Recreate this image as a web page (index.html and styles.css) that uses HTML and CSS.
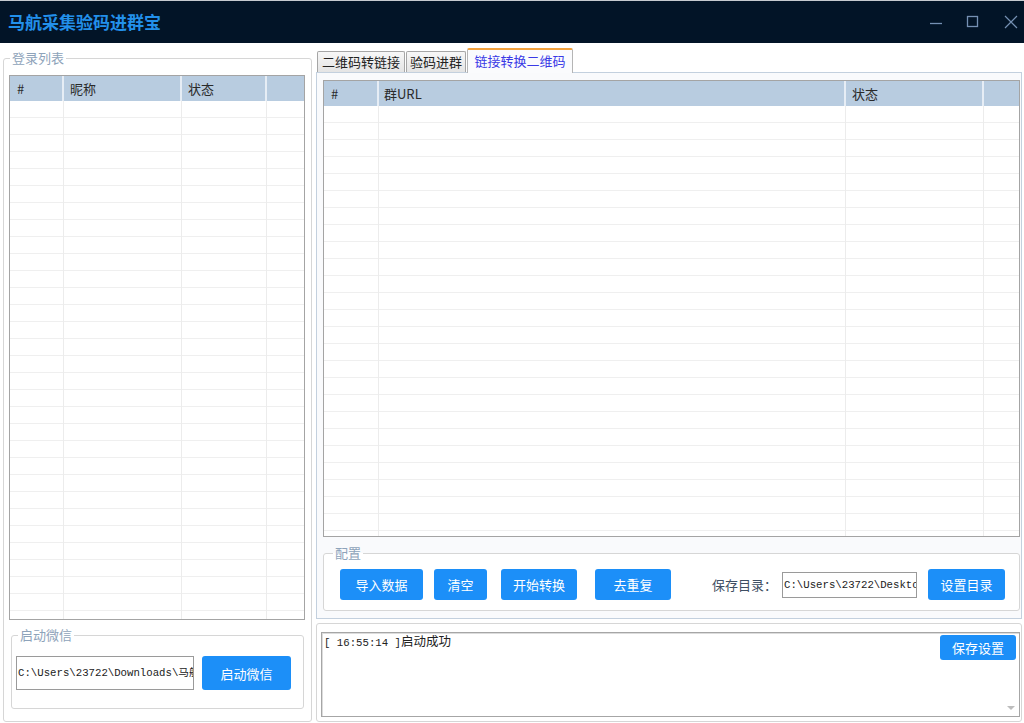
FILE: index.html
```html
<!DOCTYPE html>
<html lang="zh-CN">
<head>
<meta charset="utf-8">
<title>马航采集验码进群宝</title>
<link rel="stylesheet" href="styles.css">
</head>
<body>
<header class="titlebar">
  <h1 class="title">马航采集验码进群宝</h1>
  <div class="winctrls">
    <span class="wbtn"><svg width="14" height="14" viewBox="0 0 14 14"><path d="M1 8.5H13" stroke="#7590b3" stroke-width="1.3" fill="none"/></svg></span>
    <span class="wbtn"><svg width="14" height="14" viewBox="0 0 14 14"><rect x="1.5" y="1.5" width="10" height="10" stroke="#7590b3" stroke-width="1.3" fill="none"/></svg></span>
    <span class="wbtn close"><svg width="14" height="14" viewBox="0 0 14 14"><path d="M1 1L13 13M13 1L1 13" stroke="#7590b3" stroke-width="1.2" fill="none"/></svg></span>
  </div>
</header>
<main class="main">
  <fieldset class="group login">
    <legend>登录列表</legend>
    <div class="grid lgrid">
      <div class="ghead">
        <div class="c c1">#</div><div class="c c2">昵称</div><div class="c c3">状态</div><div class="c c4"></div>
      </div>
      <div class="gbody">
        <div class="col c1"></div><div class="col c2"></div><div class="col c3"></div><div class="col c4"></div>
      </div>
    </div>
    <fieldset class="group wx">
      <legend>启动微信</legend>
      <div class="wxrow">
        <div class="path wxpath">C:\Users\23722\Downloads\马航</div>
        <button class="btn wxbtn">启动微信</button>
      </div>
    </fieldset>
  </fieldset>

  <section class="right">
    <nav class="tabs">
      <span class="tab t1">二维码转链接</span>
      <span class="tab t2">验码进群</span>
      <span class="tab t3 active">链接转换二维码</span>
    </nav>
    <div class="panel">
      <div class="grid rgrid">
        <div class="ghead">
          <div class="c c1">#</div><div class="c c2">群URL</div><div class="c c3">状态</div><div class="c c4"></div>
        </div>
        <div class="gbody">
          <div class="col c1"></div><div class="col c2"></div><div class="col c3"></div><div class="col c4"></div>
        </div>
      </div>
      <fieldset class="group config">
        <legend>配置</legend>
        <div class="cfgrow">
          <button class="btn b-import">导入数据</button>
          <button class="btn b-clear">清空</button>
          <button class="btn b-start">开始转换</button>
          <button class="btn b-dedup">去重复</button>
          <span class="savelabel">保存目录：</span>
          <div class="path savepath">C:\Users\23722\Deskto</div>
          <button class="btn b-dir">设置目录</button>
        </div>
      </fieldset>
    </div>
    <div class="log">
      <div class="logbox">
        <p class="logline"><span class="mono">[ 16:55:14 ]</span>启动成功</p>
        <span class="arrow up"></span>
        <span class="arrow down"></span>
      </div>
      <button class="btn b-save">保存设置</button>
    </div>
  </section>
</main>
</body>
</html>
```
FILE: styles.css
```css
* { box-sizing: border-box; }
html, body { margin: 0; padding: 0; }
body {
  width: 1024px;
  height: 723px;
  overflow: hidden;
  background: #ffffff;
  font-family: "Noto Sans CJK SC", "Noto Sans", sans-serif;
  font-size: 13px;
  color: #222;
}

/* title bar */
.titlebar {
  height: 43px;
  background: #021427;
  border-top: 1px solid #c6cacf;
  display: flex;
  align-items: center;
  justify-content: space-between;
}
.title {
  margin: 0 0 0 8px;
  font-size: 17px;
  font-weight: bold;
  color: #2290ea;
  line-height: 20px;
}
.winctrls { display: flex; height: 100%; align-items: center; margin-right: -7px; }
.wbtn { width: 37px; height: 100%; display: flex; align-items: center; justify-content: center; }
.wbtn.close { width: 40px; }

/* main layout */
.main { display: flex; height: 680px; }

.group {
  margin: 0;
  border: 1px solid #d6d6d6;
  border-radius: 3px;
  min-width: 0;
}
.group > legend {
  padding: 0 2px;
  font-size: 13px;
  line-height: 16px;
  color: #8ea3ba;
}

.login {
  margin: 7px 0 0 3px;
  width: 309px;
  height: 672px;
  padding: 9px 6px 10px 5px;
  display: flex;
  flex-direction: column;
}
.login > legend { margin-left: 1px; }

/* grids */
.grid {
  border: 1px solid #a4a4a4;
  background: #fff;
  display: flex;
  flex-direction: column;
}
.ghead {
  display: flex;
  height: 25px;
  background: #b8cce0;
  flex: none;
}
.ghead .c {
  border-right: 2px solid #e6edf5;
  padding-left: 6px;
  line-height: 25px;
  font-size: 13px;
  color: #2a2a2a;
}
.ghead .c4 { border-right: 0; }
.gbody {
  flex: 1;
  display: flex;
  background: repeating-linear-gradient(to bottom, transparent 0, transparent 16px, #efefef 16px, #efefef 17px);
}
.gbody .col { border-right: 1px solid #ececec; }
.gbody .c4 { border-right: 0; }
.c4 { flex: 1; }

.lgrid { height: 545px; flex: none; }
.lgrid .c1 { width: 54px; }
.lgrid .c2 { width: 118px; }
.lgrid .c3 { width: 85px; }
.lgrid .ghead .c1 { padding-left: 7px; }

.rgrid { height: 457px; flex: none; }
.rgrid .c1 { width: 55px; }
.rgrid .c2 { width: 467px; }
.rgrid .c3 { width: 138px; }
.rgrid .ghead .c1 { padding-left: 7px; }
.rgrid .ghead .c2 { padding-left: 5px; }

/* wechat launch box */
.wx {
  margin: 7px 0 0 2px;
  width: 293px;
  padding: 13px 4px 18px 4px;
}
.wx > legend { margin-left: 2px; }
.wxrow { display: flex; align-items: center; }
.path {
  border: 1px solid #9a9a9a;
  background: #fff;
  font-family: "Liberation Mono", "Noto Sans CJK SC", monospace;
  font-size: 10.7px;
  color: #222;
  white-space: nowrap;
  overflow: hidden;
  padding-left: 1px;
}
.wxpath { width: 178px; height: 34px; line-height: 32px; }
.btn {
  border: 0;
  border-radius: 3px;
  background: #1c8ff8;
  color: #fff;
  font-family: "Noto Sans CJK SC", sans-serif;
  font-size: 13px;
  padding: 0;
  flex: none;
}
.wxbtn { margin-left: 8px; width: 89px; height: 34px; }

/* right side */
.right {
  margin-left: 4px;
  width: 706px;
  display: flex;
  flex-direction: column;
}
.tabs {
  margin-top: 6px;
  height: 23px;
  display: flex;
  align-items: flex-end;
  padding-left: 1px;
  position: relative;
  z-index: 1;
}
.tab {
  height: 21px;
  border: 1px solid #a6a6a6;
  border-bottom: 0;
  border-radius: 2px 2px 0 0;
  background: linear-gradient(#f7f7f7, #e4e4e4);
  font-size: 13px;
  line-height: 19px;
  text-align: center;
  color: #222;
}
.t1 { width: 88px; }
.t2 { width: 60px; margin-left: 1px; }
.t3 { width: 106px; margin-left: 1px; }
.tab.active {
  height: 25px;
  margin-bottom: -1px;
  background: #fafbfd;
  border-color: #b5b5b5;
  border-top: 2px solid #f2a23e;
  color: #3939e6;
  line-height: 21px;
}

.panel {
  height: 547px;
  border: 1px solid #c3d0de;
  background: #f9fafc;
  padding: 7px 1px 6px 6px;
  display: flex;
  flex-direction: column;
}

.config {
  margin-top: 8px;
  padding: 8px 14px 10px 16px;
  background: #fff;
}
.config > legend { margin-left: -7px; }
.cfgrow { display: flex; align-items: center; }
.cfgrow .btn { height: 31px; }
.b-import { width: 83px; }
.b-clear { width: 53px; margin-left: 11px; }
.b-start { width: 76px; margin-left: 14px; }
.b-dedup { width: 76px; margin-left: 18px; }
.savelabel { margin-left: auto; color: #3f4f63; font-size: 13px; }
.savepath { width: 135px; height: 26px; line-height: 24px; margin-left: 5px; }
.b-dir { width: 77px; margin-left: 11px; }

/* log */
.log {
  position: relative;
  margin-top: 4px;
  height: 99px;
  border: 1px solid #d6d6d6;
  border-radius: 3px;
  padding: 8px 1px 4px 4px;
}
.logbox {
  position: relative;
  height: 100%;
  border: 1px solid #a6a6a6;
  box-shadow: inset 1px 1px 0 #dcdcdc;
  background: #fff;
  padding: 1px 2px;
}
.logline {
  margin: 0;
  font-size: 12.5px;
  line-height: 14px;
  color: #222;
}
.mono {
  font-family: "Liberation Mono", monospace;
  font-size: 10.7px;
}
.arrow {
  position: absolute;
  right: 4px;
  width: 0;
  height: 0;
  border-left: 4px solid transparent;
  border-right: 4px solid transparent;
}
.arrow.up { top: 5px; border-bottom: 4px solid #e4e4e4; }
.arrow.down { bottom: 6px; border-top: 4px solid #bdbdbd; }
.b-save {
  position: absolute;
  top: 11px;
  right: 5px;
  width: 76px;
  height: 25px;
}
```
